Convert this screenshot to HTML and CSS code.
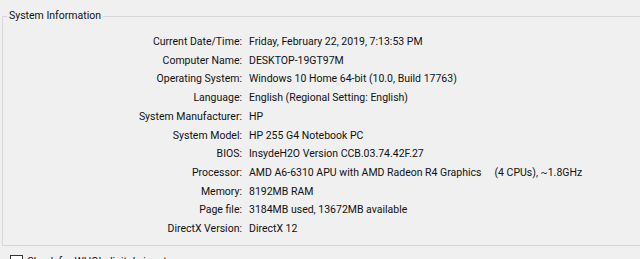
FILE: index.html
```html
<!DOCTYPE html>
<html lang="en">
<head>
    <meta charset="UTF-8">
    <title>DirectX Diagnostic Tool</title>
    <link rel="stylesheet" href="styles.css">
</head>
<body>
    <fieldset class="group">
        <legend class="group-title">System Information</legend>
        <div class="info">
            <div class="label">Current Date/Time:</div><div class="value">Friday, February 22, 2019, 7:13:53 PM</div>
            <div class="label">Computer Name:</div><div class="value">DESKTOP-19GT97M</div>
            <div class="label">Operating System:</div><div class="value">Windows 10 Home 64-bit (10.0, Build 17763)</div>
            <div class="label">Language:</div><div class="value">English (Regional Setting: English)</div>
            <div class="label">System Manufacturer:</div><div class="value">HP</div>
            <div class="label">System Model:</div><div class="value">HP 255 G4 Notebook PC</div>
            <div class="label">BIOS:</div><div class="value">InsydeH2O Version CCB.03.74.42F.27</div>
            <div class="label">Processor:</div><div class="value">AMD A6-6310 APU with AMD Radeon R4 Graphics     (4 CPUs), ~1.8GHz</div>
            <div class="label">Memory:</div><div class="value">8192MB RAM</div>
            <div class="label">Page file:</div><div class="value">3184MB used, 13672MB available</div>
            <div class="label">DirectX Version:</div><div class="value">DirectX 12</div>
        </div>
    </fieldset>
    <label class="check">
        <span class="box"></span>
        <span>Check for WHQL digital signatures</span>
    </label>
</body>
</html>
```

FILE: styles.css
```css
html, body {
    margin: 0;
    padding: 0;
}
body {
    width: 640px;
    height: 259px;
    overflow: hidden;
    background-color: #f0f0f0;
    color: #111;
    font-family: Roboto, "Liberation Sans", sans-serif;
    font-size: 10.5px;
}
.group {
    margin: 10px 0 0 2px;
    padding: 0;
    width: 700px;
    height: 236px;
    box-sizing: border-box;
    border: 1px solid #d8d8d8;
}
.group-title {
    margin-left: 4px;
    padding: 0 2px;
    line-height: 12px;
}
.info {
    display: grid;
    grid-template-columns: 239px auto;
    column-gap: 7px;
    margin-top: 11px;
    line-height: 18.7px;
}
.label {
    text-align: right;
}
.value {
    white-space: pre;
}
.check {
    display: flex;
    align-items: center;
    gap: 4px;
    margin: 9px 0 0 10px;
}
.box {
    flex: none;
    width: 11px;
    height: 11px;
    border: 1px solid #333;
    background-color: #fff;
}
```
